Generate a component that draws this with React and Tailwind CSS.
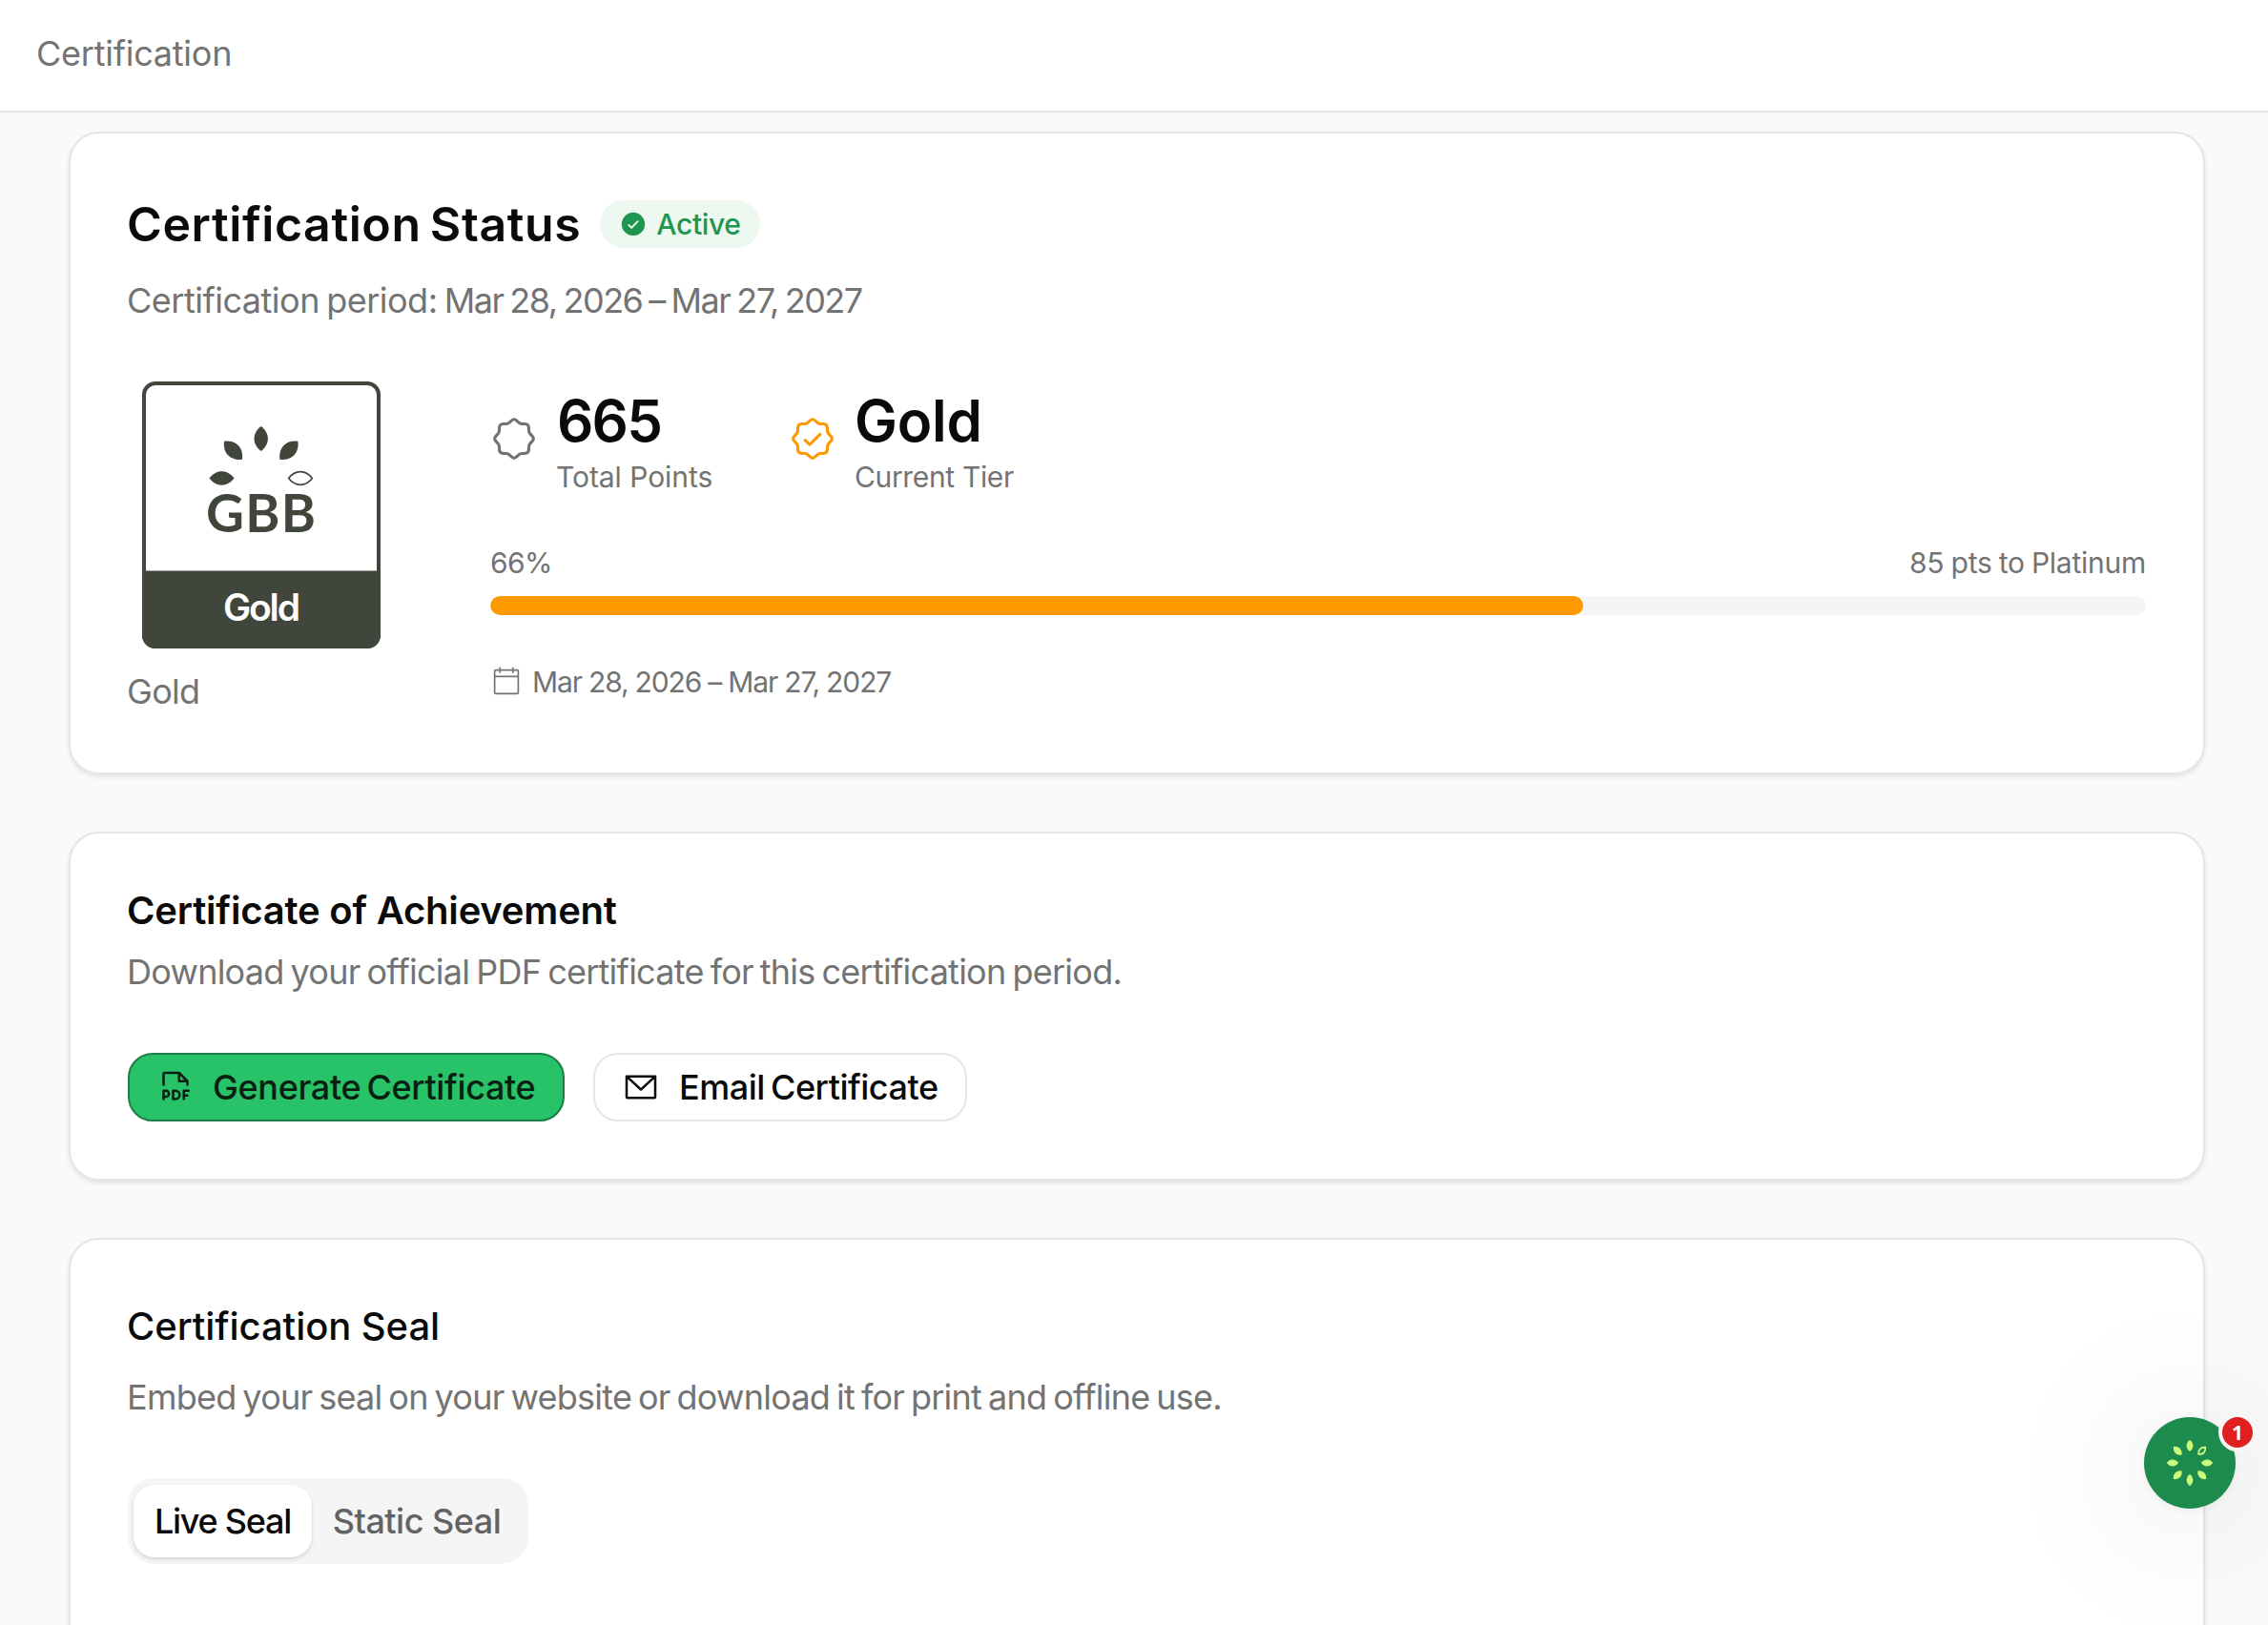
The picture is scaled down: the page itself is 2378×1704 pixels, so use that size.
import React, { useState } from 'react';
import { PiCalendarBlankLight, PiCheckCircleFill, PiEnvelopeSimple, PiFilePdf, PiSeal, PiSealCheck } from 'react-icons/pi';

const LEAF = 'M0-13C4.5-9.6 7.2-5 7.2 0S4.5 9.6 0 13C-4.5 9.6-7.2 5-7.2 0S-4.5-9.6 0-13Z';

const Card = ({ className, children }) => (
  <section
    className={`rounded-[32px] border-2 border-[#e5e5e5] bg-white px-[60px] shadow-[0_3px_5px_rgba(0,0,0,0.09)] ${className}`}
  >
    {children}
  </section>
);

const GoldSeal = () => (
  <svg width="250" height="280" viewBox="0 0 250 280" role="img" aria-label="GBB Gold seal">
    <rect x="2" y="2" width="246" height="276" rx="12" fill="#fff" stroke="#41463c" strokeWidth="4" />
    <path d="M0 198.5H250V266a14 14 0 0 1-14 14H14a14 14 0 0 1-14-14Z" fill="#41463c" />
    <g fill="#41463c">
      <path d={LEAF} transform="translate(124.7 60)" />
      <path d={LEAF} transform="translate(95.5 72.2) rotate(-45) scale(1.03)" />
      <path d={LEAF} transform="translate(153.9 72.2) rotate(45) scale(1.03)" />
      <path d={LEAF} transform="translate(83.5 101.5) rotate(90)" />
    </g>
    <path d={LEAF} transform="translate(166 101.5) rotate(90) scale(.95)" fill="none" stroke="#41463c" strokeWidth="1.7" />
    <text
      x="124.5"
      y="158"
      textAnchor="middle"
      textLength="115"
      fill="#41463c"
      className="font-['Lato',sans-serif] text-[55px] font-bold"
    >
      GBB
    </text>
    <text
      x="125.5"
      y="251"
      textAnchor="middle"
      textLength="81"
      fill="#fff"
      className="font-['Inter',sans-serif] text-[39px] font-semibold"
    >
      Gold
    </text>
  </svg>
);

const Stat = ({ icon, value, label }) => (
  <div className="flex items-start gap-5">
    <div className="mt-6">{icon}</div>
    <div>
      {value}
      {label}
    </div>
  </div>
);

// Eight leaves around a ring, the north-east one is hollow
const ChatLauncher = () => (
  <button className="fixed right-[34px] bottom-[122px] flex size-24 items-center justify-center rounded-full bg-[#1e8b4e] shadow-[0_2px_12px_rgba(0,0,0,0.06),0_10px_160px_rgba(0,0,0,0.16)]">
    <svg width="48" height="48" viewBox="-24 -24 48 48">
      {[0, 45, 90, 135, 180, 225, 270, 315].map((angle) => (
        <path
          key={angle}
          d={LEAF}
          transform={`rotate(${angle}) translate(0 -18) scale(${angle === 45 ? 0.38 : 0.47})`}
          fill={angle === 45 ? 'none' : '#cbfb7c'}
          stroke={angle === 45 ? '#cbfb7c' : 'none'}
          strokeWidth="5"
        />
      ))}
    </svg>
    <span className="absolute -top-[4px] -right-[22px] size-10 rounded-full border-4 border-[#f7f7f7] bg-[#e02020] text-center font-['Noto_Sans',sans-serif] text-[21px] leading-8 font-bold text-white">
      1
    </span>
  </button>
);

const App = () => {
  const [tab, setTab] = useState('live');
  const progress = 66;

  return (
    <div className="flex h-screen flex-col overflow-hidden bg-[#fafafa] font-['Inter',sans-serif] text-[#0a0a0a]">
      <header className="flex h-[118px] shrink-0 items-center border-b-2 border-[#e5e5e5] bg-white px-[38px] pb-1">
        <h1 className="text-[36px] leading-[54px] tracking-[-0.25px] text-[#737373]">Certification</h1>
      </header>

      <main className="flex flex-col gap-[60px] pt-5 pr-[66px] pl-[72px]">
        {/* Status */}
        <Card className="h-[674px] shrink-0 pt-[65px]">
          <div className="-ml-px flex h-[60px] items-center gap-5">
            <h2 className="text-[50px] leading-[60px] font-semibold tracking-[0.6px] [word-spacing:-4px]">Certification Status</h2>
            <span className="flex h-[50px] items-center gap-[9px] rounded-full bg-[#edf8f1] px-5 text-[30px] font-medium tracking-[-0.35px] text-[#1f9650]">
              <PiCheckCircleFill size={30} />
              Active
            </span>
          </div>
          <p className="mt-[23px] -ml-px text-[36px] leading-[54px] text-[#737373]">
            <span className="tracking-[-0.5px] [word-spacing:-2.4px]">Certification period: </span>
            <span className="tracking-[-1.5px] [word-spacing:-1.8px]">Mar 28, 2026 – Mar 27, 2027</span>
          </p>

          <div className="mt-[58px] flex gap-[100px]">
            <div className="w-[280px] shrink-0">
              <div className="flex justify-center">
                <GoldSeal />
              </div>
              <p className="mt-[18px] -ml-px text-[36px] leading-[54px] tracking-[-0.7px] text-[#737373]">Gold</p>
            </div>

            <div className="flex-1 pt-[11px]">
              <div className="flex gap-20">
                <Stat
                  icon={<PiSeal size={50} className="text-[#737373]" />}
                  value={<p className="text-[60px] leading-[60px] font-semibold tracking-[-1.8px]">665</p>}
                  label={
                    <p className="mt-[7px] -ml-px w-[164px] text-[30px] leading-[44px] tracking-[-0.05px] whitespace-nowrap text-[#737373]">
                      Total Points
                    </p>
                  }
                />
                <Stat
                  icon={<PiSealCheck size={50} className="text-[#fd9a00]" />}
                  value={<p className="-ml-px text-[60px] leading-[60px] font-semibold tracking-[-0.2px]">Gold</p>}
                  label={<p className="mt-[7px] -ml-px text-[30px] leading-[44px] tracking-[-0.35px] text-[#737373]">Current Tier</p>}
                />
              </div>

              <div className="mt-[46px] flex justify-between text-[30px] leading-[44px] text-[#737373]">
                <span className="tracking-[-0.6px]">{progress}%</span>
                <span className="tracking-[-0.25px] [word-spacing:-1px]">85 pts to Platinum</span>
              </div>
              <div className="mt-[13px] h-5 overflow-hidden rounded-full bg-[#f5f5f5]">
                <div className="h-full rounded-full bg-[#fd9a00]" style={{ width: `${progress}%` }} />
              </div>

              <div className="mt-[48px] -ml-px flex items-center gap-[9px] text-[30px] leading-[44px] tracking-[-1.1px] text-[#737373] [word-spacing:-0.3px]">
                <PiCalendarBlankLight size={36} />
                Mar 28, 2026 – Mar 27, 2027
              </div>
            </div>
          </div>
        </Card>

        {/* Certificate */}
        <Card className="h-[366px] shrink-0 pt-[51px]">
          <h3 className="-ml-px text-[40px] leading-[60px] font-semibold tracking-[-0.2px]">Certificate of Achievement</h3>
          <p className="mt-[7px] -ml-px text-[36px] leading-[54px] tracking-[-0.75px] text-[#737373] [word-spacing:-2.4px]">
            Download your official PDF certificate for this certification period.
          </p>
          <div className="mt-[58px] flex gap-[30px]">
            <button className="flex h-[72px] w-[458px] items-center gap-[19px] rounded-[26px] border-2 border-[#1d7f47] bg-[#28c268] px-7 text-[36px] font-medium tracking-[-0.36px] whitespace-nowrap text-[#0a1f12] [word-spacing:-3px]">
              <PiFilePdf size={40} className="shrink-0" />
              Generate Certificate
            </button>
            <button className="flex h-[72px] w-[392px] items-center gap-5 rounded-[26px] border-2 border-[#e5e5e5] bg-white px-7 text-[36px] font-medium tracking-[-0.48px] whitespace-nowrap [word-spacing:-3px]">
              <PiEnvelopeSimple size={40} className="shrink-0" />
              Email Certificate
            </button>
          </div>
        </Card>

        {/* Seal */}
        <Card className="h-[520px] shrink-0 pt-[61px]">
          <h3 className="-ml-px text-[40px] leading-[60px] font-medium tracking-[-0.07px]">Certification Seal</h3>
          <p className="mt-[17px] -ml-px text-[36px] leading-[54px] tracking-[-0.75px] text-[#737373] [word-spacing:-2.5px]">
            Embed your seal on your website or download it for print and offline use.
          </p>
          <div className="mt-[58px] flex h-[90px] w-[420px] items-center rounded-[28px] bg-[#f5f5f5] px-1.5 text-[36px] font-medium whitespace-nowrap">
            <button
              onClick={() => setTab('live')}
              className={`h-[76px] w-[187px] rounded-[22px] tracking-[-1.25px] ${tab === 'live' ? 'bg-white shadow-[0_2px_4px_rgba(0,0,0,0.14)]' : 'text-[#636363]'}`}
            >
              Live Seal
            </button>
            <button
              onClick={() => setTab('static')}
              className={`h-[76px] w-[220px] rounded-[22px] tracking-[-0.5px] ${tab === 'static' ? 'bg-white shadow-[0_2px_4px_rgba(0,0,0,0.14)]' : 'text-[#636363]'}`}
            >
              Static Seal
            </button>
          </div>
        </Card>
      </main>

      <ChatLauncher />
    </div>
  );
};

export default App;
